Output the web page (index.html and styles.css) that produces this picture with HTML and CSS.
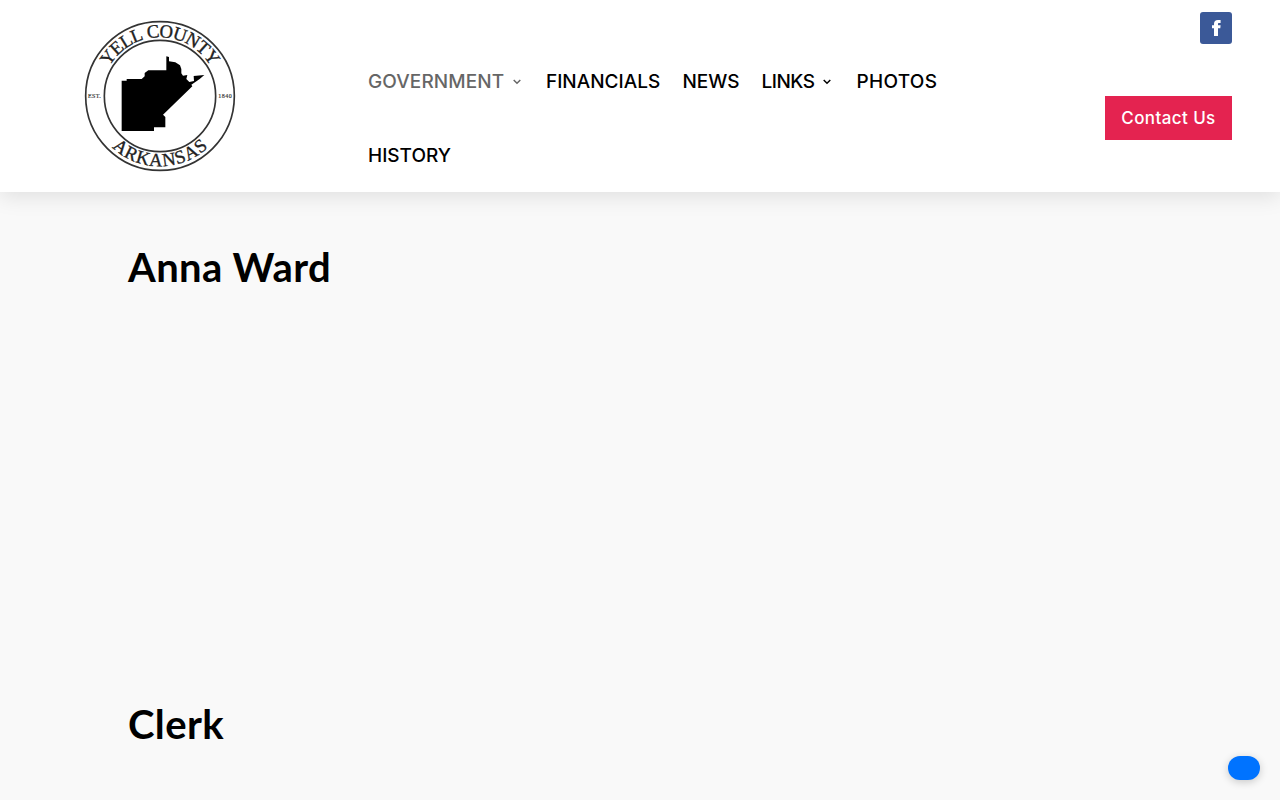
FILE: index.html
```html
<!DOCTYPE html>
<html lang="en">
<head>
  <meta charset="UTF-8" />
  <meta name="viewport" content="width=device-width, initial-scale=1.0" />
  <title>Anna Ward | Yell County</title>
  <link rel="stylesheet" href="styles.css">
</head>
<body>
  <header class="header">
    <a class="logo" href="#">
      <svg width="160" height="160" viewBox="0 0 480 480" role="img" aria-label="Yell County Arkansas">
        <defs>
          <path id="arc-top" d="M64 240A176 176 0 0 1 416 240" />
          <path id="arc-bottom" d="M29 240A211 211 0 0 0 451 240" />
        </defs>
        <circle class="ring" cx="240" cy="240" r="223" />
        <circle class="ring" cx="240" cy="240" r="167" />
        <path d="M125 194H140V189H185L194 181V171L205 163H259V121L267 123V136L286 139L300 148L304 159V172L309 179L322 177L319 189L328 198L342 195L341 180L373 177L359 189L345 199L334 206L337 211L249 296L256 303V334H222V345H125Z" />
        <text class="seal-text"><textPath href="#arc-top" startOffset="50%" textLength="368">YELL COUNTY</textPath></text>
        <text class="seal-text"><textPath href="#arc-bottom" startOffset="50%" textLength="318">ARKANSAS</textPath></text>
        <text class="seal-small" x="43" y="246" textLength="38">EST.</text>
        <text class="seal-small" x="435" y="246" textLength="40">1840</text>
      </svg>
    </a>

    <nav class="menu">
      <a class="item government active" href="#">GOVERNMENT
        <svg class="arrow" width="8" height="6" viewBox="0 0 8 6"><path d="M0.7 1L4 4.2L7.3 1" /></svg>
      </a>
      <a class="item financials" href="#">FINANCIALS</a>
      <a class="item news" href="#">NEWS</a>
      <a class="item links" href="#">LINKS
        <svg class="arrow" width="8" height="6" viewBox="0 0 8 6"><path d="M0.7 1L4 4.2L7.3 1" /></svg>
      </a>
      <a class="item photos" href="#">PHOTOS</a>
      <a class="item history" href="#">HISTORY</a>
    </nav>

    <div class="side">
      <a class="facebook" href="#" aria-label="Facebook">
        <svg width="32" height="32" viewBox="0 0 32 32"><path d="M14 24V16.3H12V13.3H14V12C14 9.2 15.4 8 18 8H20.6V11H19C18.2 11 18 11.3 18 12.1V13.3H20.6L20.3 16.3H18V24Z" /></svg>
      </a>
      <a class="btn-contact" href="#">Contact Us</a>
    </div>
  </header>

  <main class="content">
    <h1>Anna Ward</h1>
    <div class="photo"></div>
    <h2>Clerk</h2>
  </main>

  <button class="widget" aria-label="Accessibility"></button>
</body>
</html>
```
FILE: styles.css
```css
* {
  box-sizing: border-box;
}
body {
  margin: 0;
  height: 800px;
  overflow: hidden;
  background: #f9f9f9;
  color: #000;
  font-family: Lato, sans-serif;
}
a {
  color: inherit;
  text-decoration: none;
}
.header {
  display: flex;
  height: 192px;
  padding-right: 48px;
  background: #fff;
  box-shadow: 0 5px 20px rgba(0, 0, 0, 0.1);
}
.logo {
  width: 368px;
  padding: 16px 0 0 80px;
}
.logo svg {
  display: block;
}
.ring {
  fill: none;
  stroke: #333;
  stroke-width: 5;
}
.seal-text {
  font-family: "Liberation Serif", serif;
  font-size: 56px;
  word-spacing: 3px;
  fill: #222;
  stroke: #222;
  stroke-width: 1;
  text-anchor: middle;
}
.seal-small {
  font-family: "Liberation Serif", serif;
  font-size: 18px;
  fill: #333;
  stroke: #333;
  stroke-width: 0.5;
  text-anchor: middle;
}
.menu {
  display: flex;
  flex-wrap: wrap;
  align-content: flex-start;
  width: 624px;
  padding-top: 44px;
  font-family: Inter, sans-serif;
  font-size: 19px;
  font-weight: 500;
}
.item {
  display: flex;
  align-items: center;
  height: 74px;
  white-space: nowrap;
}
.active {
  color: #666;
}
.government {
  width: 178px;
  letter-spacing: 0.1px;
}
.financials {
  width: 136.5px;
}
.news {
  width: 79px;
}
.links {
  width: 95px;
  letter-spacing: -0.5px;
}
.photos {
  width: 130px;
  letter-spacing: 0.3px;
}
.arrow {
  margin: 2px 0 0 9px;
  fill: none;
  stroke: currentColor;
  stroke-width: 1.5;
}
.side {
  display: flex;
  flex: 1;
  flex-direction: column;
  align-items: flex-end;
  gap: 52px;
  padding-top: 12px;
}
.facebook {
  width: 32px;
  height: 32px;
  border-radius: 3px;
  background: #3b5998;
}
.facebook path {
  fill: #fff;
}
.btn-contact {
  width: 127px;
  height: 44px;
  background: #e42350;
  color: #fff;
  font: 500 17px/44px Inter, sans-serif;
  letter-spacing: 0.4px;
  text-align: center;
}
.content {
  padding: 50px 128px 0;
}
h1,
h2 {
  margin: 0;
  font-size: 40px;
  font-weight: 700;
  line-height: 50px;
  letter-spacing: 0.4px;
}
.photo {
  height: 407px;
}
.widget {
  position: fixed;
  right: 20px;
  bottom: 20px;
  width: 32px;
  height: 24px;
  padding: 0;
  border: none;
  border-radius: 12px;
  background: #0073ff;
  box-shadow: 0 2px 8px rgba(0, 0, 0, 0.2);
}
```
